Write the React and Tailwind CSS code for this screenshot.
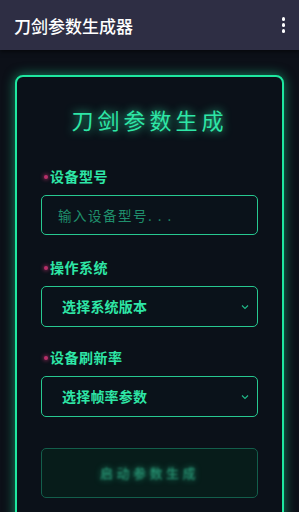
import React from "react";

const font = { fontFamily: '"Noto Sans CJK SC", "Noto Sans", sans-serif' };

function Label({ children }) {
  return (
    <div className="flex items-center h-[20px]">
      <span className="w-[4px] h-[4px] ml-[3px] mt-[1px] rounded-full bg-[#b8306a] shadow-[0_0_4px_#ff3a8a] mr-[2px]" />
      <span className="text-[14px] font-bold text-[#2ee6a6] tracking-[0.5px]">{children}</span>
    </div>
  );
}

function Chevron() {
  return (
    <svg width="8" height="6" viewBox="0 0 8 6" className="mr-[2px]">
      <path d="M1 1.5 L4 4.5 L7 1.5" fill="none" stroke="#1fb98a" strokeWidth="1.1" />
    </svg>
  );
}

function Select({ text }) {
  return (
    <div className="mt-[9px] h-[41px] rounded-[5px] border-[1.5px] border-[#27c890] bg-[#0a121a] flex items-center justify-between pl-[20px] pr-[6px]">
      <span className="text-[14px] font-bold text-[#2ee6a6] tracking-[0.2px]">{text}</span>
      <Chevron />
    </div>
  );
}

export default function App() {
  return (
    <div className="w-[299px] h-[512px] overflow-hidden bg-[#0c1018]" style={font}>
      {/* app bar */}
      <div className="h-[50px] bg-[#2e2e44] flex items-center justify-between pl-[14px] pr-[14px] shadow-[0_2px_4px_rgba(0,0,0,0.5)] relative z-10">
        <span className="text-[17px] font-medium text-white leading-none">刀剑参数生成器</span>
        <div className="flex flex-col gap-[2.5px] items-center">
          <span className="w-[3.5px] h-[3.5px] rounded-full bg-white" />
          <span className="w-[3.5px] h-[3.5px] rounded-full bg-white" />
          <span className="w-[3.5px] h-[3.5px] rounded-full bg-white" />
        </div>
      </div>

      <div className="px-[15px] pt-[25px]">
        <div className="rounded-[8px] border-[2px] border-[#1ee8a0] bg-[#0b1119] shadow-[0_0_12px_rgba(30,230,155,0.55)] px-[24px] pt-[26px] pb-[20px] h-[480px]">
          <div className="text-center text-[22px] text-[#2ee6a6] tracking-[4px] leading-[32px] [text-shadow:0_0_10px_rgba(46,230,166,0.9)]">
            刀剑参数生成
          </div>

          <div className="mt-[31px]">
            <Label>设备型号</Label>
            <div className="mt-[9px] h-[40px] rounded-[5px] border-[1.5px] border-[#27c890] bg-[#0a121a] flex items-center pl-[16px]">
              <span className="text-[13.5px] text-[#1f8f6c] tracking-[1.5px]">输入设备型号. . .</span>
            </div>
          </div>

          <div className="mt-[22px]">
            <Label>操作系统</Label>
            <Select text="选择系统版本" />
          </div>

          <div className="mt-[20px]">
            <Label>设备刷新率</Label>
            <Select text="选择帧率参数" />
          </div>

          <div className="mt-[31px] h-[50px] rounded-[5px] border border-[#135e4b] bg-[#071c1a] flex items-center justify-center">
            <span className="text-[13px] text-[#2a9c7a] tracking-[3.5px] blur-[1.2px] [text-shadow:0_0_6px_rgba(46,230,166,0.6)]">启动参数生成</span>
          </div>
        </div>
      </div>
    </div>
  );
}
